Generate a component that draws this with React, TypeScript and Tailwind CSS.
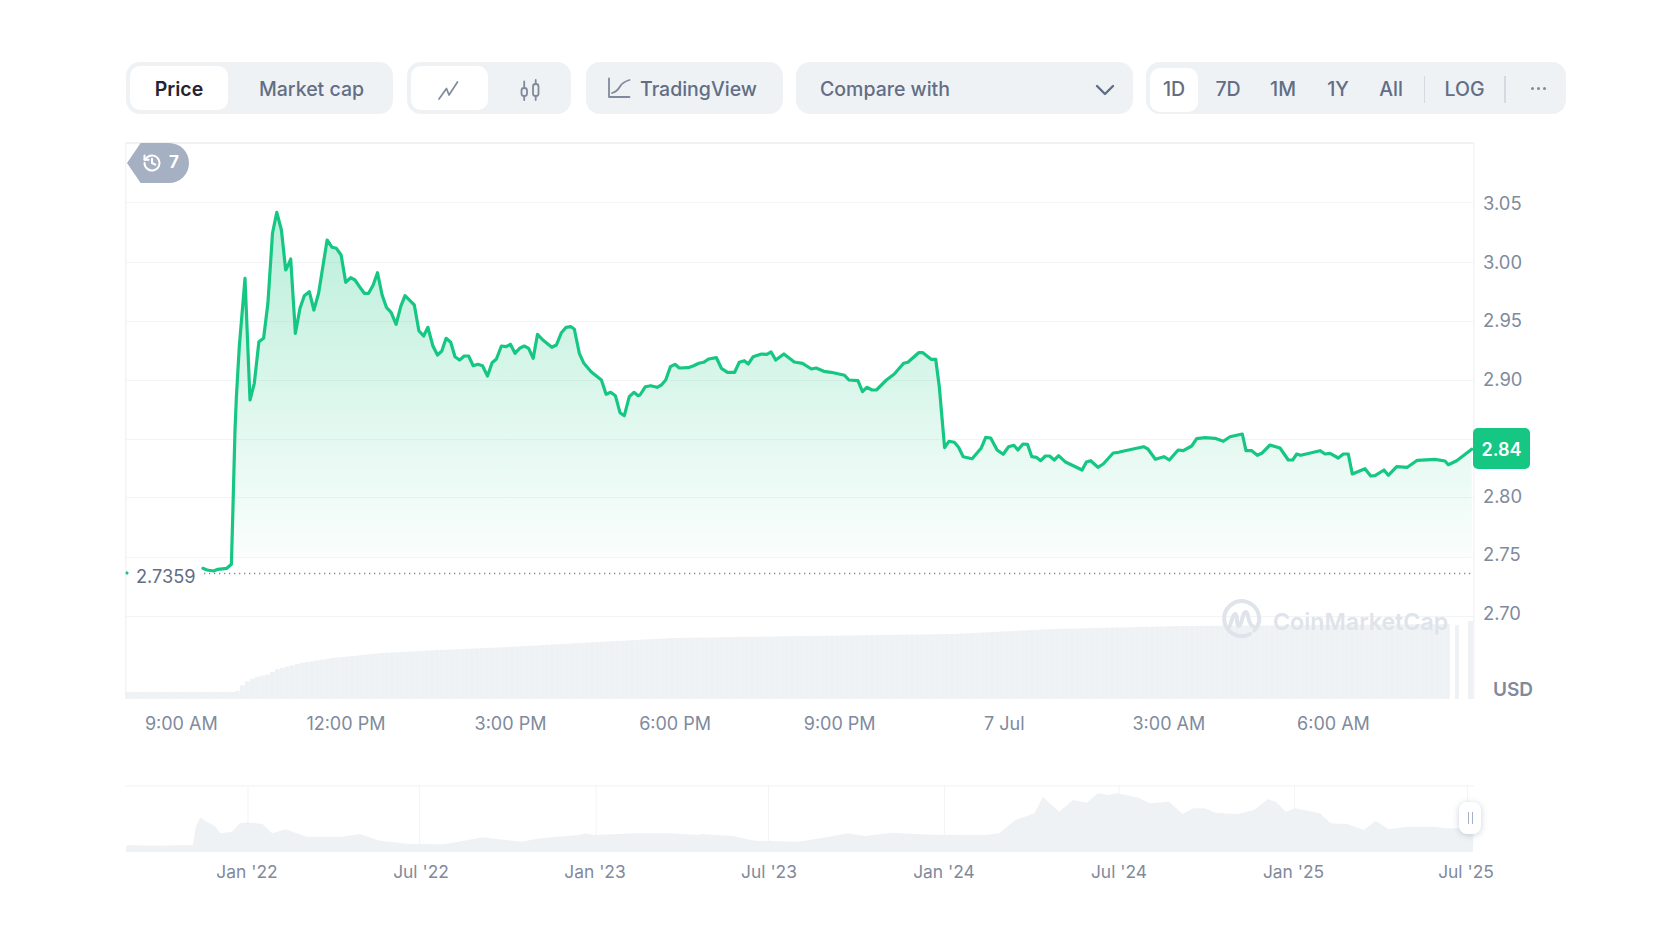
import React from "react";

type P = [number, number];
const z3: P[] = [[288,1135],[300,1140],[318,1143],[330,1138],[355,1135],[368,1123],[372,960],[378,720],[382,620],[390,470],[406,265],[420,630],[432,580],[445,455],[458,445],[470,340],[483,130],[495,67],[508,120],[520,240],[527,225],[534,207],[547,430],[560,355],[572,317],[586,305],[599,360],[612,310],[636,150],[650,172],[662,175],[675,195],[688,277],[702,263],[714,270],[728,292],[740,310],[752,310],[765,285],[777,248],[790,315],[802,352],[815,367],[829,403],[842,350],[854,317],[868,332],[880,345],[893,422],[906,438],[918,412],[932,468],[945,495],[957,483],[969,445],[982,457],[994,500],[1007,510],[1020,498],[1032,498],[1045,527],[1058,523],[1071,527],[1085,558],[1098,518],[1110,507],[1124,468],[1137,470],[1149,463],[1162,490],[1175,475],[1188,468],[1200,475],[1213,505],[1225,433],[1240,450],[1265,472],[1278,465],[1292,428],[1305,412],[1318,410],[1328,417],[1342,490],[1355,520],[1375,545],[1404,570],[1417,613],[1430,607],[1443,617],[1456,668],[1468,677],[1482,620],[1495,607],[1507,617]];
const z4: P[] = [[0,285],[15,260],[30,257],[48,262],[60,255],[72,240],[85,200],[98,193],[110,204],[135,203],[150,197],[165,190],[178,187],[192,177],[214,173],[228,205],[245,217],[265,217],[278,187],[292,182],[303,192],[317,170],[340,162],[355,163],[367,156],[380,180],[403,162],[432,186],[455,190],[480,207],[493,204],[515,214],[535,217],[573,226],[585,240],[610,242],[623,275],[635,262],[650,270],[662,270],[690,240],[712,222],[738,190],[750,187],[780,158],[792,158],[815,178],[828,178],[838,260],[853,443],[865,424],[880,427],[892,442],[905,470],[930,476],[955,445],[968,412],[982,414],[1000,450],[1017,463],[1032,440],[1047,436],[1058,450],[1072,432],[1085,433],[1097,470],[1110,472],[1122,482],[1135,468],[1147,468],[1160,480],[1172,467],[1190,485],[1238,510],[1250,486],[1262,482],[1282,502],[1297,492],[1325,459],[1340,457],[1355,453],[1410,440],[1422,447],[1443,478],[1467,470],[1482,480],[1507,450]];
const z5: P[] = [[10,212],[35,198],[50,176],[75,173],[105,175],[130,184],[150,170],[187,162],[198,212],[215,212],[232,226],[245,220],[270,195],[300,204],[325,240],[338,240],[350,222],[362,226],[420,212],[435,222],[450,220],[475,234],[490,222],[505,222],[517,282],[555,266],[572,288],[585,287],[612,270],[625,286],[650,260],[682,262],[712,241],[765,238],[795,243],[805,254],[830,242],[875,208]];

const price: P[] = [
  ...z3.map(([x, y]): P => [100 + x / 2.8, 190 + y / 3]),
  ...z4.map(([x, y]): P => [640 + x / 2.8, 300 + y / 3]),
  ...z5.map(([x, y]): P => [1180 + x / 3, 380 + y / 3]),
];
const toPts = (a: P[]) => a.map(([x, y]) => `${x.toFixed(1)},${y.toFixed(1)}`).join(" ");
const areaPts = price.filter(([x]) => x >= 232);
const area = toPts([[areaPts[0][0], 557], ...areaPts, [1472, 557]]);

const volTop: P[] = [[125,692],[234,692],[242,683],[253,677],[268,674],[272,670],[299,663],[330,658],[379,653],[437,650],[506,647],[578,643],[670,638],[800,636],[950,634],[1050,629],[1180,626],[1450,624]];
const interp = (a: P[], x: number) => {
  for (let i = 1; i < a.length; i++) {
    if (x <= a[i][0]) {
      const t = (x - a[i - 1][0]) / (a[i][0] - a[i - 1][0]);
      return a[i - 1][1] + t * (a[i][1] - a[i - 1][1]);
    }
  }
  return a[a.length - 1][1];
};
const bars: number[] = [];
for (let x = 125; x < 1450; x += 5) bars.push(x);

const n6: P[] = [[68,858],[80,855],[130,857],[243,855],[250,800],[262,772],[275,782],[300,798],[315,820],[345,815],[365,790],[385,787],[425,792],[450,820],[485,808],[540,830],[630,830],[680,822],[730,842],[780,848],[810,852],[900,853],[1000,832],[1100,845],[1150,835],[1250,825],[1270,820],[1290,825],[1400,820],[1490,820],[1568,825]];
const n7: P[] = [[0,402],[60,408],[100,422],[180,425],[230,412],[270,400],[300,408],[350,398],[420,404],[520,405],[545,400],[575,360],[610,340],[625,290],[655,335],[680,300],[705,308],[725,280],[745,285],[760,280],[800,293],[820,310],[855,305],[880,342],[900,325],[920,325],[940,338],[980,342],[1010,330],[1035,298],[1050,305],[1068,335],[1085,325],[1130,340],[1150,370],[1180,372],[1210,390],[1232,362],[1255,388],[1290,380],[1340,380],[1360,385],[1410,385]];
const navPts: P[] = [
  ...n6.map(([x, y]): P => [100 + x / 2.613, 560 + y / 3]),
  ...n7.map(([x, y]): P => [700 + x / 1.823, 700 + y / 3]),
];
const navArea = toPts([[126, 852], ...navPts, [1473, 852]]);

const gridYs = [202, 262, 321, 380, 439, 497, 557, 616];
const navXs = [247.5, 419, 595.7, 768, 944, 1118.5, 1294, 1467];
const yLabels = ["3.05", "3.00", "2.95", "2.90", "", "2.80", "2.75", "2.70"];
const xLabels = ["9:00 AM", "12:00 PM", "3:00 PM", "6:00 PM", "9:00 PM", "7 Jul", "3:00 AM", "6:00 AM"];
const navLabels: [string, number][] = [["Jan '22", 172], ["Jul '22", 176], ["Jan '23", 172], ["Jul '23", 176], ["Jan '24", 174], ["Jul '24", 176], ["Jan '25", 173], ["Jul '25", 172]];
const ranges: [string, string][] = [["1D", "w-[48px] ml-[4px] bg-white rounded-[10px]"], ["7D", "w-[52px] ml-[4px]"], ["1M", "w-[54px] ml-[2px]"], ["1Y", "w-[52px] ml-[2px]"], ["All", "w-[52px] ml-[1px]"]];

export default function App() {
  return (
    <div className="w-[1680px] h-[944px] bg-white overflow-hidden font-[family-name:Inter,sans-serif] text-[#616e85]">
      <div className="flex pt-[62px] pl-[126px] h-[114px] text-[19.5px] font-medium leading-none">
        <div className="flex items-center w-[267px] h-[52px] bg-[#eff2f5] rounded-[14px] p-[4px]">
          <div className="flex items-center justify-center w-[98px] h-[44px] pt-[3px] bg-white rounded-[10px] text-[#222531] font-semibold">Price</div>
          <div className="flex items-center justify-center flex-1 pl-[6px] pt-[3px]">Market cap</div>
        </div>
        <div className="flex items-center w-[164px] h-[52px] ml-[14px] bg-[#eff2f5] rounded-[14px] p-[4px]">
          <div className="flex items-center justify-center w-[77px] h-[44px] pr-[4px] pt-[3px] bg-white rounded-[10px]">
            <svg width="24" height="24" viewBox="0 0 24 24" fill="none" stroke="#808a9d" strokeWidth="1.7" strokeLinejoin="round" strokeLinecap="round">
              <path d="M3 21 L10.5 10.5 L13 17 L21.5 4" />
            </svg>
          </div>
          <div className="flex items-center justify-center flex-1 pl-[4px] pt-[3px]">
            <svg width="24" height="24" viewBox="0 0 24 24" fill="none" stroke="#808a9d" strokeWidth="1.8" strokeLinecap="round">
              <rect x="3.5" y="10" width="5.5" height="8" rx="2.5" />
              <path d="M6.2 3.5V10M6.2 18V22" />
              <rect x="15" y="6" width="5.5" height="12" rx="2.5" />
              <path d="M17.7 2V6M17.7 18V22" />
            </svg>
          </div>
        </div>
        <div className="flex items-center gap-[9px] w-[197px] h-[52px] ml-[15px] pl-[21px] pt-[3px] bg-[#eff2f5] rounded-[14px]">
          <svg width="24" height="22" viewBox="0 0 24 22" fill="none" stroke="#808a9d" strokeWidth="1.8" strokeLinecap="round" strokeLinejoin="round" className="-mt-[4px]">
            <path d="M2 1.5V20H22.5" />
            <path d="M5 16 C9 15 11 13 13 9.5 C14.5 7 17 4.5 22.5 3" />
          </svg>
          <span>TradingView</span>
        </div>
        <div className="flex items-center justify-between w-[337px] h-[52px] ml-[13px] pl-[24px] pr-[18px] pt-[3px] bg-[#eff2f5] rounded-[14px]">
          <span>Compare with</span>
          <svg width="20" height="12" viewBox="0 0 20 12" fill="none" stroke="#616e85" strokeWidth="2.4" strokeLinecap="round" strokeLinejoin="round">
            <path d="M2 2 L10 10 L18 2" />
          </svg>
        </div>
        <div className="flex items-center w-[420px] h-[52px] ml-[13px] pt-[3px] bg-[#eff2f5] rounded-[14px]">
          {ranges.map(([t, c]) => (
            <div key={t} className={`flex items-center justify-center h-[44px] ${c}`}>{t}</div>
          ))}
          <div className="w-px h-[27px] bg-[#d5dae2] ml-[7px]" />
          <div className="flex items-center justify-center w-[79px]">LOG</div>
          <div className="w-[2px] h-[27px] bg-[#d5dae2]" />
          <div className="flex items-center justify-center flex-1 gap-[3px] pb-[3px] pl-[5px]">
            <span className="size-[3px] rounded-full bg-[#808a9d]" />
            <span className="size-[3px] rounded-full bg-[#808a9d]" />
            <span className="size-[3px] rounded-full bg-[#808a9d]" />
          </div>
        </div>
      </div>

      <div className="flex mt-[28px] ml-[125px] h-[557px] relative">
        <svg width="1350" height="557" viewBox="125 142 1350 557" className="block shrink-0">
          <defs>
            <linearGradient id="g" gradientUnits="userSpaceOnUse" x1="0" y1="210" x2="0" y2="557">
              <stop offset="0" stopColor="#16c784" stopOpacity="0.3" />
              <stop offset="1" stopColor="#16c784" stopOpacity="0.02" />
            </linearGradient>
          </defs>
          <rect x="125.5" y="142" width="1348" height="2" fill="#eff2f5" />
          <rect x="125" y="142" width="1.5" height="557" fill="#f3f4f7" />
          <rect x="1473" y="142" width="1.5" height="557" fill="#f3f4f7" />
          {gridYs.map((y) => <rect key={y} x="126" y={y} width="1347" height="1" fill="#f3f4f7" />)}
          {bars.map((x) => {
            const t = interp(volTop, x);
            return <rect key={x} x={x} y={t} width="4.85" height={699 - t} fill="#eff2f5" />;
          })}
          <rect x="1455" y="625" width="4" height="74" fill="#eff2f5" />
          <rect x="1468" y="621" width="5" height="78" fill="#eff2f5" />
          <polygon points={area} fill="url(#g)" />
          <line x1="204" y1="573.5" x2="1473" y2="573.5" stroke="#808a9d" strokeWidth="1.3" strokeDasharray="1.3 3.7" />
          <polyline points={toPts(price)} fill="none" stroke="#16c784" strokeWidth="3.2" strokeLinejoin="round" strokeLinecap="round" />
          <path d="M126 572 L128 574" stroke="#16c784" strokeWidth="2.5" />
          <g fill="none" stroke="#dfe3ea" strokeWidth="4" strokeLinecap="round" strokeLinejoin="round" transform="translate(-2 0)">
            <path d="M1256.5 630.5 A17.5 17.5 0 1 0 1252 634" />
            <path d="M1230 628 C1233 628 1234 614 1237 614 C1240 614 1238 626 1241 626 C1244 626 1244 612 1248 612 C1251 612 1249 625 1256 627" />
          </g>
        </svg>
        <div className="flex flex-col pt-[32px] pl-[8px] text-[18.4px] leading-none text-[#808a9d] w-[100px]">
          {yLabels.map((l, i) => (
            <div key={i} className="flex items-center h-[59.14px]">{l}</div>
          ))}
          <div className="pl-[10px] mt-[38px] font-semibold text-[19px]">USD</div>
        </div>
        <div className="absolute left-[1348px] top-[286px] w-[57px] h-[41px] flex items-center justify-center pt-[2px] rounded-[5px] bg-[#16c784] text-white text-[18px] font-semibold">2.84</div>
        <div className="absolute left-[2px] top-[1px] w-[62px] h-[40px] flex items-center justify-end pr-[10px] gap-[7px] rounded-r-[20px] bg-[#a6b0c3] text-white text-[17px] font-bold [clip-path:polygon(0_50%,22%_0,100%_0,100%_100%,22%_100%)]">
          <svg width="20" height="20" viewBox="0 0 24 24" fill="none" stroke="white" strokeWidth="2.4" strokeLinecap="round" strokeLinejoin="round">
            <path d="M3 12a9 9 0 1 0 3-6.7L3 8" />
            <path d="M3 3v5h5" />
            <path d="M12 7v5l4 2" />
          </svg>
          <span>7</span>
        </div>
        <div className="absolute left-[10px] top-[423px] bg-white px-[1px] text-[18.2px] leading-[22px] text-[#616e85]">2.7359</div>
        <div className="absolute left-[1148px] top-[466px] text-[23.2px] font-semibold leading-[28px] text-[#dfe3ea]">CoinMarketCap</div>
      </div>

      <div className="flex items-center h-[50px] pl-[99px] text-[18px] leading-none text-[#808a9d]">
        {xLabels.map((l) => (
          <div key={l} className="w-[164.6px] text-center">{l}</div>
        ))}
      </div>

      <div className="relative mt-[36px] ml-[125px] w-[1350px] h-[67px]">
        <svg width="1350" height="67" viewBox="125 785 1350 67" className="block">
          <rect x="125" y="785" width="1349" height="1.5" fill="#f5f6f8" />
          {navXs.map((x) => <rect key={x} x={x} y="785" width="1" height="67" fill="#f3f4f7" />)}
          <polygon points={navArea} fill="#eff2f5" />
        </svg>
        <div className="absolute left-[1334px] top-[17px] w-[22px] h-[32px] flex items-center justify-center gap-[3px] bg-white rounded-[8px] shadow-[0_1px_6px_rgba(88,102,126,0.3)]">
          <span className="w-px h-[12px] bg-[#a6b0c3]" />
          <span className="w-px h-[12px] bg-[#a6b0c3]" />
        </div>
      </div>

      <div className="flex items-center h-[40px] pl-[161px] text-[17.4px] leading-none text-[#808a9d]">
        {navLabels.map(([l, w]) => (
          <div key={l} className="text-center shrink-0" style={{ width: w }}>{l}</div>
        ))}
      </div>
    </div>
  );
}
